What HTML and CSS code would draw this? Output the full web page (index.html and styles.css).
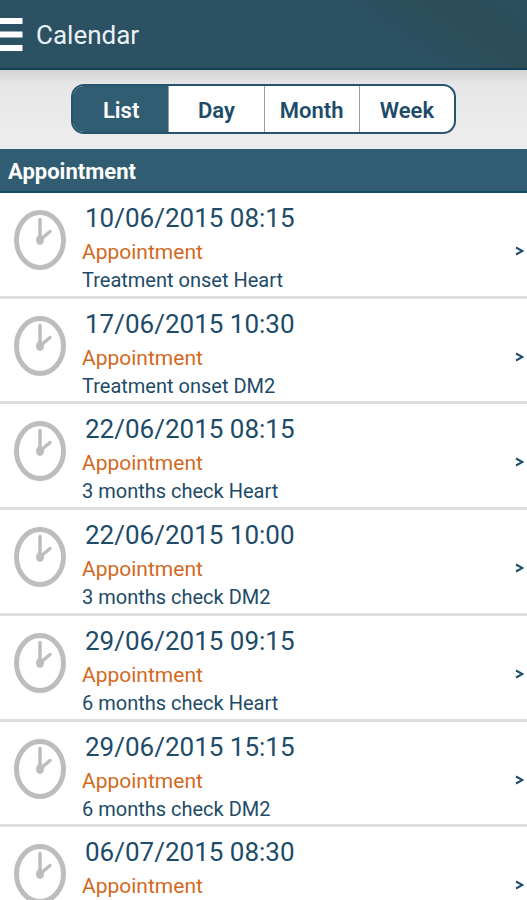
FILE: index.html
```html
<!DOCTYPE html>
<html lang="en">
<head>
<meta charset="utf-8">
<meta name="viewport" content="width=device-width, initial-scale=1">
<title>Calendar</title>
<link rel="stylesheet" href="styles.css">
</head>
<body>
<svg class="sprite" aria-hidden="true">
  <symbol id="clock" viewBox="0 0 52 62">
    <ellipse cx="26" cy="31" rx="23.5" ry="27.5" fill="none" stroke="#bdbdbd" stroke-width="5"/>
    <path d="M26 31V10.500M26 31L36 22.500" fill="none" stroke="#bdbdbd" stroke-width="3.5" stroke-linecap="round"/>
    <ellipse cx="26" cy="31" rx="4" ry="5" fill="#bdbdbd"/>
  </symbol>
  <symbol id="chevron" viewBox="0 0 9 10">
    <path d="M1 1.500L7.500 5L1 8.500" fill="none" stroke="#1d4f6c" stroke-width="2"/>
  </symbol>
</svg>
<header class="topbar">
  <button class="menu" type="button" aria-label="Menu">
    <svg width="23" height="34" viewBox="0 0 23 34"><path d="M0 3H22.500M0 16.500H22.500M0 30H22.500" stroke="#fff" stroke-width="6"/></svg>
  </button>
  <h1 class="title">Calendar</h1>
</header>
<nav class="switcher" aria-label="View">
  <div class="tabs">
    <button class="tab active" type="button">List</button>
    <button class="tab" type="button">Day</button>
    <button class="tab" type="button">Month</button>
    <button class="tab" type="button">Week</button>
  </div>
</nav>
<main class="content">
  <h2 class="section">Appointment</h2>
  <ul class="list">
    <li><a class="row" href="#"><svg class="clock"><use href="#clock"/></svg><span class="text"><span class="date">10/06/2015 08:15</span><span class="kind">Appointment</span><span class="note">Treatment onset Heart</span></span><svg class="chevron"><use href="#chevron"/></svg></a></li>
    <li><a class="row" href="#"><svg class="clock"><use href="#clock"/></svg><span class="text"><span class="date">17/06/2015 10:30</span><span class="kind">Appointment</span><span class="note">Treatment onset DM2</span></span><svg class="chevron"><use href="#chevron"/></svg></a></li>
    <li><a class="row" href="#"><svg class="clock"><use href="#clock"/></svg><span class="text"><span class="date">22/06/2015 08:15</span><span class="kind">Appointment</span><span class="note">3 months check Heart</span></span><svg class="chevron"><use href="#chevron"/></svg></a></li>
    <li><a class="row" href="#"><svg class="clock"><use href="#clock"/></svg><span class="text"><span class="date">22/06/2015 10:00</span><span class="kind">Appointment</span><span class="note">3 months check DM2</span></span><svg class="chevron"><use href="#chevron"/></svg></a></li>
    <li><a class="row" href="#"><svg class="clock"><use href="#clock"/></svg><span class="text"><span class="date">29/06/2015 09:15</span><span class="kind">Appointment</span><span class="note">6 months check Heart</span></span><svg class="chevron"><use href="#chevron"/></svg></a></li>
    <li><a class="row" href="#"><svg class="clock"><use href="#clock"/></svg><span class="text"><span class="date">29/06/2015 15:15</span><span class="kind">Appointment</span><span class="note">6 months check DM2</span></span><svg class="chevron"><use href="#chevron"/></svg></a></li>
    <li><a class="row" href="#"><svg class="clock"><use href="#clock"/></svg><span class="text"><span class="date">06/07/2015 08:30</span><span class="kind">Appointment</span></span><svg class="chevron"><use href="#chevron"/></svg></a></li>
  </ul>
</main>
</body>
</html>
```
FILE: styles.css
```css
* {
  box-sizing: border-box;
}

body {
  margin: 0;
  height: 100vh;
  display: flex;
  flex-direction: column;
  overflow: hidden;
  background: #fff;
  color: #1d4b68;
  font-family: Roboto, sans-serif;
}

button {
  margin: 0;
  padding: 0;
  border: 0;
  background: none;
  color: inherit;
  font: inherit;
}

.sprite {
  display: none;
}

.topbar {
  flex: none;
  display: flex;
  align-items: center;
  gap: 13px;
  height: 70px;
  padding-top: 2px;
  border-bottom: 2px solid #103e52;
  background: linear-gradient(35deg, transparent 70%, #2d4d57 86%, #2b4f60 100%), #2c5163;
  color: #e9f1f5;
}

.menu,
.menu svg {
  display: block;
}

.title {
  margin: 0;
  font-size: 26px;
  line-height: 32px;
  font-weight: 400;
}

.switcher {
  flex: none;
  padding: 14px 71px 15px;
  background: linear-gradient(#d3d3d3, #e7e7e7 14px, #eee);
}

.tabs {
  display: flex;
  height: 50px;
  overflow: hidden;
  border: 2px solid #27546d;
  border-radius: 13px;
  background: #fff;
}

.tab {
  flex: 1;
  padding-top: 4px;
  border-left: 1px solid #929fa9;
  font-size: 22px;
  line-height: 26px;
  font-weight: 600;
}

.tab.active {
  border-left-color: #315d72;
  background: #315d72;
  color: #fff;
}

.content {
  flex: 1;
  min-height: 0;
  overflow: hidden;
}

.section {
  margin: 0;
  padding: 10px 8px 6px;
  border-bottom: 2px solid #124d67;
  background: #315d72;
  color: #fff;
  font-size: 22px;
  line-height: 26px;
  font-weight: 700;
}

.list {
  display: grid;
  grid-auto-rows: 1fr;
  min-height: 740px;
  margin: 0;
  padding: 0;
  list-style: none;
}

.row {
  display: flex;
  height: 100%;
  padding: 9px 3px 0 14px;
  border-bottom: 3px solid #dedede;
  color: inherit;
  text-decoration: none;
}

.clock {
  flex: none;
  width: 52px;
  height: 62px;
  margin-top: 7px;
}

.text {
  flex: 1;
  display: flex;
  flex-direction: column;
  padding-left: 16px;
}

.date {
  padding-left: 3px;
  font-size: 26px;
  line-height: 32px;
}

.kind,
.note {
  font-size: 21px;
  line-height: 28px;
}

.kind {
  padding-top: 4px;
  color: #d2691e;
}

.note {
  font-size: 20px;
}

.chevron {
  flex: none;
  width: 9px;
  height: 10px;
  margin-top: 44px;
}
```
